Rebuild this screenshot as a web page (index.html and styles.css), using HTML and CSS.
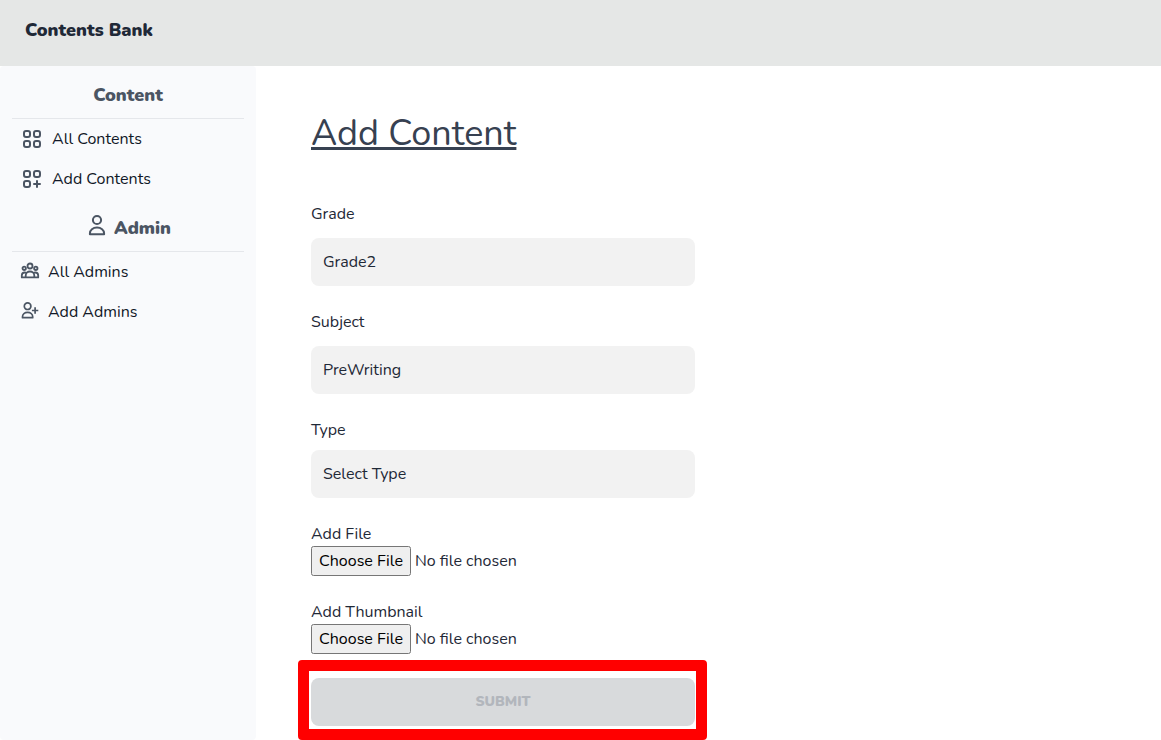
FILE: index.html
```html
<!DOCTYPE html>
<html lang="en">
<head>
<meta charset="utf-8">
<meta name="viewport" content="width=device-width, initial-scale=1">
<title>Contents Bank</title>
<link rel="stylesheet" href="styles.css">
</head>
<body>
<header class="topbar"><a class="brand" href="#">Contents Bank</a></header>
<div class="layout">
  <nav class="sidebar">
    <h2 class="group-title">Content</h2>
    <a class="nav-link" href="#">
      <svg class="icon-lg" viewBox="0 0 24 24"><g stroke-width="2"><rect x="4" y="4" width="6" height="6" rx="2"/><rect x="14" y="4" width="6" height="6" rx="2"/><rect x="4" y="14" width="6" height="6" rx="2"/><rect x="14" y="14" width="6" height="6" rx="2"/></g></svg>
      <span>All Contents</span>
    </a>
    <a class="nav-link" href="#">
      <svg class="icon-lg" viewBox="0 0 24 24"><g stroke-width="2"><rect x="4" y="4" width="6" height="6" rx="2"/><rect x="14" y="4" width="6" height="6" rx="2"/><rect x="4" y="14" width="6" height="6" rx="2"/><path d="M17 14v6M14 17h6" stroke-linecap="round"/></g></svg>
      <span>Add Contents</span>
    </a>
    <h2 class="group-title">
      <svg class="icon-lg" viewBox="0 0 24 24"><g stroke-width="2"><circle cx="12" cy="6" r="4.1"/><path d="M4.9 20.2v-.8c0-3.3 3-5.8 7.1-5.8s7.1 2.5 7.1 5.8v.8z" stroke-linejoin="round"/></g></svg>
      <span>Admin</span>
    </h2>
    <a class="nav-link" href="#">
      <svg class="icon-sm" viewBox="0 0 20 20"><g stroke-width="1.8" stroke-linejoin="round"><circle cx="10" cy="4" r="2.5"/><circle cx="4.2" cy="6.3" r="1.7"/><circle cx="15.8" cy="6.3" r="1.7"/><path d="M5.7 15.4v-1.7c0-2.4 1.9-4.2 4.3-4.2s4.3 1.8 4.3 4.2v1.7zM5.7 15.4H1.8v-2c0-1.7 1.2-2.9 3-2.9.7 0 1.3.2 1.8.5M14.3 15.4h3.9v-2c0-1.7-1.2-2.9-3-2.9-.7 0-1.3.2-1.8.5"/></g></svg>
      <span>All Admins</span>
    </a>
    <a class="nav-link" href="#">
      <svg class="icon-sm" viewBox="0 0 20 20"><g stroke-width="1.7" stroke-linejoin="round"><circle cx="7.6" cy="4.2" r="3.3"/><path d="M2.5 15.7v-.9c0-2.6 2.2-4.4 5.1-4.4s5.1 1.8 5.1 4.4v.9zM15.1 5.3v6.4M11.9 8.5h6.4"/></g></svg>
      <span>Add Admins</span>
    </a>
  </nav>
  <main class="main">
    <h1 class="title">Add Content</h1>
    <form class="form">
      <div class="field">
        <label for="grade">Grade</label>
        <select id="grade" class="select"><option>Grade2</option></select>
      </div>
      <div class="field">
        <label for="subject">Subject</label>
        <select id="subject" class="select"><option>PreWriting</option></select>
      </div>
      <div class="field field-snug">
        <label for="type">Type</label>
        <select id="type" class="select"><option>Select Type</option></select>
      </div>
      <div class="field field-file">
        <label for="file">Add File</label>
        <input id="file" class="file" type="file">
      </div>
      <div class="field field-file">
        <label for="thumbnail">Add Thumbnail</label>
        <input id="thumbnail" class="file" type="file">
      </div>
      <div class="submit-area">
        <button class="submit" type="submit" disabled>SUBMIT</button>
        <div class="highlight"></div>
      </div>
    </form>
  </main>
</div>
</body>
</html>
```
FILE: styles.css
```css
* { box-sizing: border-box; }
body {
  margin: 0;
  min-height: 100vh;
  display: flex;
  flex-direction: column;
  background: #fff;
  color: #1f2937;
  font: 16px/24px Nunito, Lato, sans-serif;
}
.topbar { padding: 16px 25px 22px; background: #e5e7e6; }
.brand {
  display: block;
  color: #1f2937;
  font-size: 18px;
  font-weight: 900;
  line-height: 28px;
  text-decoration: none;
}
.layout { flex: 1; display: flex; }
.sidebar {
  flex: none;
  width: 256px;
  padding: 0 12px;
  background: #f9fafc;
  border-radius: 4px;
}
.group-title {
  display: flex;
  justify-content: center;
  gap: 5px;
  margin: 0;
  padding: 15px 0 9px;
  border-bottom: 1px solid #e5e7eb;
  color: #4b5563;
  font-size: 18px;
  font-weight: 900;
  line-height: 28px;
}
.nav-link {
  display: flex;
  align-items: center;
  gap: 8px;
  padding: 8px;
  color: #111827;
  text-decoration: none;
}
svg { flex: none; fill: none; stroke: #4b5563; }
.icon-lg { width: 24px; height: 24px; }
.icon-sm { width: 20px; height: 20px; }
.main { flex: 1; min-width: 0; padding: 48px 55px 0; }
.title {
  margin: 0 0 48px;
  color: #374151;
  font-size: 36px;
  font-weight: 400;
  line-height: 40px;
  text-decoration: underline;
}
.form { display: flex; flex-direction: column; gap: 24px; max-width: 384px; }
.field { display: flex; flex-direction: column; gap: 12px; }
.field-snug { gap: 8px; }
.field-file { gap: 0; }
.select {
  appearance: none;
  width: 100%;
  height: 48px;
  padding: 0 12px;
  border: 0;
  border-radius: 8px;
  background: #f2f2f2;
  color: #1f2937;
  font: inherit;
}
.file { width: 100%; height: 30px; color: #1f2937; font: inherit; }
.file::file-selector-button { height: 30px; padding: 1px 6px; font: inherit; }
.submit-area { position: relative; }
.submit {
  display: block;
  width: 100%;
  height: 48px;
  border: 0;
  border-radius: 8px;
  background: #d8dadc;
  color: #b2b6bc;
  font: inherit;
  font-size: 14px;
  font-weight: 900;
}
.highlight {
  position: absolute;
  inset: -18px -12px -14px -13px;
  border: 11px solid #f00;
  border-radius: 4px;
  pointer-events: none;
}
```
